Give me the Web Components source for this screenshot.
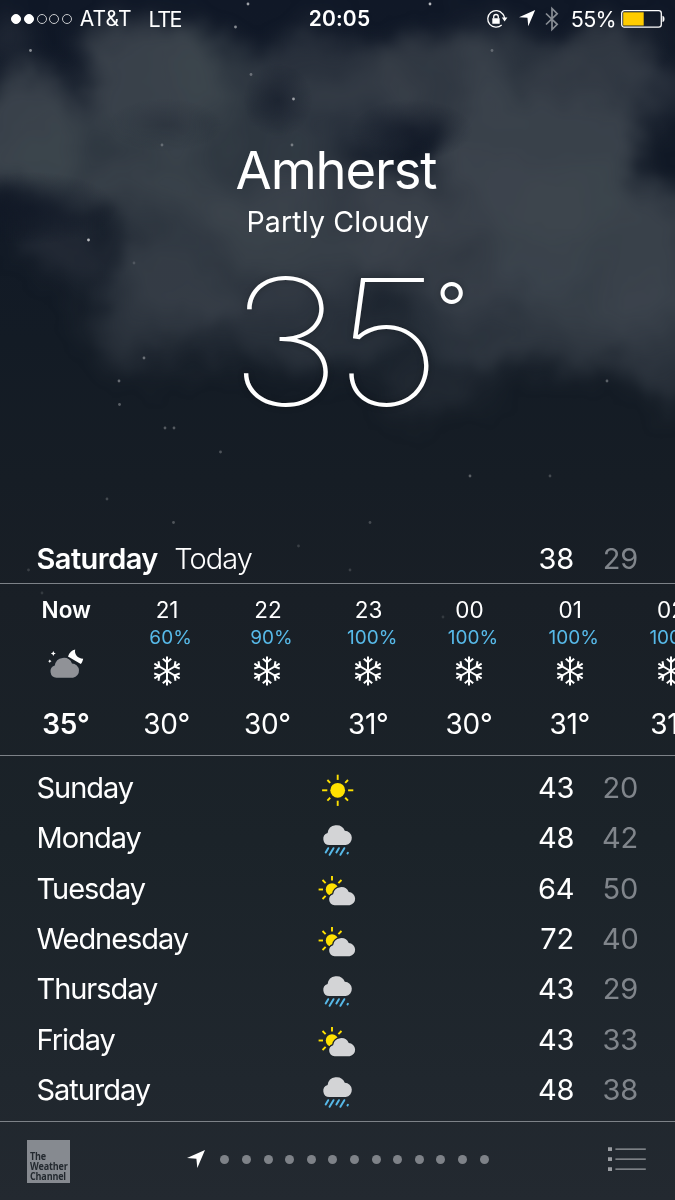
<!DOCTYPE html>
<html lang="en">
<head>
<meta charset="utf-8">
<title>Weather</title>
<style>
  html, body { margin: 0; background: #141b24; }
  body {
    width: 675px; height: 1200px; overflow: hidden;
    font-family: Inter, "Liberation Sans", sans-serif;
    color: #fff;
    --wx-muted: #80858b;
    --wx-rule: #7d8288;
    --wx-precip: #57b9e8;
  }
</style>
</head>
<body>
<wx-app></wx-app>

<script>
/**
 * <wx-icon name="..."> - inline SVG glyphs, sized by their own viewBox.
 */
const cloudPath = 'M6.3 20.7A6.2 6.2 0 0 1 4.6 8.6A9 9 0 0 1 21.8 6.4A7.2 7.2 0 0 1 22.8 20.7z';
const rays = (cx, cy, r1, r2, angles) => angles.map(a => {
  const c = Math.cos(a * Math.PI / 180), s = Math.sin(a * Math.PI / 180);
  return `<path d="M${cx + c * r1} ${cy + s * r1}L${cx + c * r2} ${cy + s * r2}"/>`;
}).join('');

const ICONS = {
  sun: [38, 38, `
    <circle cx="18.7" cy="19.3" r="7.4" fill="#ffe100"/>
    <g stroke="#ffe100" stroke-width="1.9">${rays(18.7, 19.3, 10.4, 15.6, [0, 90, 180, 270])}${rays(18.7, 19.3, 10.6, 14.6, [45, 135, 225, 315])}</g>`],
  rain: [38, 38, `
    <path transform="translate(4 3.4)" fill="#d3d4d6" d="${cloudPath}"/>
    <g stroke="#57b9e8" stroke-width="2" stroke-linecap="round">
      <path d="M9.2 27.2l-2.500 4.200M14.500 27.200l-3.900 6.600M19.900 27.200l-2.500 4.200M25.300 27.200l-3.900 6.600M28.900 31.800l-.4.6"/>
    </g>`],
  partly: [38, 38, `
    <circle cx="13" cy="18.500" r="6.200" fill="#ffe100"/>
    <g stroke="#ffe100" stroke-width="1.900">${rays(13, 18.5, 9, 13.4, [135, 180, 225, 270, 315])}</g>
    <path transform="translate(9.900 15.300) scale(.91)" fill="#d3d4d6" stroke="#1c242a" stroke-width="2.400" paint-order="stroke" d="${cloudPath}"/>`],
  night: [38, 34, `
    <g transform="translate(0 -6.500)">
      <path fill="#fff" d="M28.200 2C27 6.500 30.500 11 36.200 11.300C35.700 13.500 35 15.200 33.800 16.500L21 9C22.300 5 25 2.600 28.200 2z"/>
      <path fill="#fff" d="M6.300 3.500l.8 1.700 1.700.8-1.700.8-.8 1.700-.8-1.700-1.700-.8 1.700-.8zM2.800 12l.6 1.100 1.100.6-1.100.6-.6 1.100-.6-1.100-1.100-.6 1.100-.6z"/>
      <path transform="translate(3.200 9.500)" fill="#909297" stroke="#19212a" stroke-width="2" paint-order="stroke" d="${cloudPath}"/>
    </g>`],
  snow: [30, 30, `
    <g fill="none" stroke="#fff" stroke-width="2">
      ${[0, 60, 120, 180, 240, 300].map(a => `<path transform="rotate(${a} 15 15)" d="M15 15V.4M10.800 2.700L15 6.300l4.200-3.600"/>`).join('')}
    </g>`],
  lock: [22, 20, `
    <path fill="none" stroke="#fff" stroke-width="1.300" d="M16.600 4.800A8.300 8.300 0 1 0 15.700 16M16.600 4.800A8.300 8.300 0 0 1 18.600 9"/>
    <path fill="#fff" d="M15.800 8.600h5.600l-2.800 3.800zM6.300 9.200h7.400v5.500H6.300z"/>
    <path fill="none" stroke="#fff" stroke-width="1.300" d="M7.700 9.500V7.800a2.300 2.300 0 0 1 4.600 0v1.700"/>`],
  arrow: [18, 18, `<path fill="#fff" d="M0 8.100L18 0 10.300 18 9.400 8.700z"/>`],
  bluetooth: [14, 24, `
    <path fill="none" stroke="#888d94" stroke-width="1.700" d="M1 6.500l11.200 10.800L7 22.500V1.500l5.200 5.200L1 17.500"/>`],
  battery: [44, 18, `
    <rect x=".7" y=".7" width="39.600" height="16.400" rx="2.600" fill="none" stroke="#fff" stroke-width="1.300"/>
    <path fill="#fff" d="M41.500 5.700c1.300.3 2 1.500 2 3.200s-.7 2.900-2 3.200z"/>
    <rect x="2.200" y="2.300" width="20.500" height="13.200" fill="#fc0"/>`],
  list: [40, 26, `
    <path fill="#9a9da2" d="M1 1.300h4v3.800H1zM1 11.300h4v3.800H1zM1 21.200h4v3.800H1z"/>
    <path stroke="#9a9da2" stroke-width="1.300" d="M8.400 3.200h30.400M8.400 13.200h30.400M8.400 23.200h30.400"/>`]
};

class WxIcon extends HTMLElement {
  constructor() {
    super();
    this.attachShadow({ mode: 'open' });
  }

  connectedCallback() {
    const [w, h, body] = ICONS[this.getAttribute('name')];
    this.shadowRoot.innerHTML = `
      <style>
        :host { display: block; flex: none; }
        svg { display: block; overflow: visible; }
      </style>
      <svg width="${w}" height="${h}" viewBox="0 0 ${w} ${h}">${body}</svg>
    `;
  }
}

/**
 * <wx-sky> - night sky with clouds and stars; the slot sits on top.
 */
const STARS = [
  [248, 4, .6], [430, 4, .7], [235.5, 27, .5], [30.5, 50.5, .5], [492, 50.5, .25], [251, 74.5, .3],
  [293.5, 99, .55], [162, 145, .25], [292, 145, .35], [88.5, 240, .7], [134, 263, .15], [144, 358, .35],
  [119, 381, .35], [119.5, 404.5, .3], [165, 428, .28], [174, 428, .28], [220.5, 452, .25], [607, 381, .3],
  [470, 476, .3], [550, 476, .2], [107, 499, .2], [173.5, 522.5, .25], [370, 522.5, .2], [298.5, 546, .15],
  [28.5, 570, .15], [350, 570, .15], [42, 593, .12], [443, 617, .12]
];
// cx, cy, rx, ry, opacity
const CLOUDS = [
  [155, 85, 72, 62, .9], [215, 85, 54, 52, .65], [28, 135, 58, 60, .9], [100, 165, 90, 50, .65],
  [10, 40, 30, 26, .3], [160, 195, 90, 36, .6], [330, 70, 76, 44, .55], [250, 175, 90, 60, .65],
  [440, 80, 70, 50, .7], [505, 65, 54, 44, .6], [600, 65, 60, 40, .7], [655, 90, 35, 30, .4],
  [340, 115, 70, 40, .5], [545, 165, 100, 80, .9], [480, 235, 130, 70, .7], [330, 225, 130, 55, .7],
  [590, 250, 90, 80, .65], [660, 260, 52, 74, .75], [530, 315, 130, 54, .5], [240, 265, 130, 60, .55],
  [155, 290, 72, 54, .5], [160, 335, 70, 34, .3], [300, 325, 100, 44, .4], [665, 345, 46, 58, .5],
  [55, 250, 34, 28, .35], [435, 390, 48, 24, .3], [340, 350, 120, 26, .2], [560, 345, 120, 26, .3]
];

class WxSky extends HTMLElement {
  constructor() {
    super();
    this.attachShadow({ mode: 'open' });
    this.shadowRoot.innerHTML = `
      <style>
        :host {
          display: block; position: relative; height: 1200px; overflow: hidden;
          background: linear-gradient(#101827 0, #111926 160px, #131b25 340px, #161d25 480px, #191f26 600px, #1b2329 840px, #20272e 1080px, #232930 1200px);
        }
        svg { position: absolute; inset: 0; }
        .content { position: relative; height: 100%; }
      </style>
      <svg width="675" height="1200">
        <defs>
          <filter id="puff" filterUnits="userSpaceOnUse" x="-80" y="-80" width="835" height="620" color-interpolation-filters="sRGB">
            <feGaussianBlur stdDeviation="13" result="soft"/>
            <feTurbulence type="fractalNoise" baseFrequency=".014" numOctaves="4" seed="8"/>
            <feDisplacementMap in="soft" scale="64" xChannelSelector="R" yChannelSelector="G"/>
            <feGaussianBlur stdDeviation="3"/>
          </filter>
          <radialGradient id="shade"><stop offset="0" stop-color="#121927"/><stop offset="1" stop-color="#121927" stop-opacity="0"/></radialGradient>
        </defs>
        <g filter="url(#puff)" fill="#3e464f">
          ${CLOUDS.map(([x, y, rx, ry, o]) => `<ellipse cx="${x}" cy="${y}" rx="${rx}" ry="${ry}" opacity="${o}"/>`).join('')}
        </g>
        <g fill="url(#shade)">
          <ellipse cx="278" cy="100" rx="34" ry="36" opacity=".55"/>
          <ellipse cx="412" cy="130" rx="60" ry="30" opacity=".7"/>
          <ellipse cx="165" cy="125" rx="56" ry="26" opacity=".3"/>
          <ellipse cx="30" cy="208" rx="85" ry="36" opacity=".85"/>
        </g>
        <g fill="#fff">${STARS.map(([x, y, o]) => `<circle cx="${x}" cy="${y}" r="1.4" opacity="${o}"/>`).join('')}</g>
      </svg>
      <div class="content"><slot></slot></div>
    `;
  }
}

/** <wx-status-bar> - signal, carrier, clock and battery. */
class WxStatusBar extends HTMLElement {
  constructor() {
    super();
    this.attachShadow({ mode: 'open' });
    this.shadowRoot.innerHTML = `
      <style>
        :host {
          display: grid; grid-template-columns: 1fr auto 1fr; align-items: center;
          height: 37px; padding: 0 10px 0 11px; font-size: 21px;
        }
        .side { display: flex; align-items: center; }
        .right { justify-content: flex-end; }
        .dots { display: flex; gap: 2.8px; margin-right: 7.5px; }
        .dots i { box-sizing: border-box; width: 10px; height: 10px; border: 1px solid #c8cacd; border-radius: 50%; }
        .dots .on { background: #fff; border-color: #fff; }
        .net { margin-left: 17px; letter-spacing: -1.5px; font-size: 21.5px; }
        .carrier { letter-spacing: .1px; }
        .time { font-weight: 600; letter-spacing: .2px; padding-left: 3px; }
        .pct { margin: 0 5px 0 12px; letter-spacing: -.7px; font-size: 21.5px; }
        .loc { margin-right: 10.5px; zoom: .9; }
        .lock { margin-right: 11.5px; }
      </style>
      <div class="side">
        <span class="dots"><i class="on"></i><i class="on"></i><i></i><i></i><i></i></span>
        <span class="carrier">AT&amp;T</span><span class="net">LTE</span>
      </div>
      <span class="time">20:05</span>
      <div class="side right">
        <wx-icon class="lock" name="lock"></wx-icon>
        <wx-icon class="loc" name="arrow"></wx-icon>
        <wx-icon name="bluetooth"></wx-icon>
        <span class="pct">55%</span>
        <wx-icon name="battery"></wx-icon>
      </div>
    `;
  }
}

/**
 * <wx-current> - city, condition and the large temperature.
 * Attributes: city, condition, temp
 */
class WxCurrent extends HTMLElement {
  constructor() {
    super();
    this.attachShadow({ mode: 'open' });
  }

  connectedCallback() {
    this.shadowRoot.innerHTML = `
      <style>
        :host { display: flex; flex-direction: column; align-items: center; height: 497px; box-sizing: border-box; padding-top: 101px; }
        .city { font-size: 52.5px; line-height: 64px; letter-spacing: -1.1px; padding-right: 3px; }
        .condition { font-size: 28.5px; line-height: 39px; letter-spacing: .15px; padding-left: 1px; }
        .temp {
          display: flex; align-items: flex-start; margin-left: 32px;
          font-size: 175px; line-height: 200px; font-weight: 100; text-shadow: 0 0 6px rgba(0,0,0,.25);
        }
        .num { transform: scaleX(1.11); letter-spacing: -8px; }
        .deg { font-size: 70px; line-height: 134px; font-weight: 300; margin-left: 12px; }
      </style>
      <div class="city">${this.getAttribute('city')}</div>
      <div class="condition">${this.getAttribute('condition')}</div>
      <div class="temp"><span class="num">${this.getAttribute('temp')}</span><span class="deg">°</span></div>
    `;
  }
}

/**
 * <wx-day> - one row of the daily forecast, name in the slot.
 * Attributes: high, low, icon (optional)
 */
class WxDay extends HTMLElement {
  constructor() {
    super();
    this.attachShadow({ mode: 'open' });
  }

  connectedCallback() {
    const icon = this.getAttribute('icon');
    this.shadowRoot.innerHTML = `
      <style>
        :host {
          display: grid; grid-template-columns: 1fr 38px 1fr; align-items: center;
          height: 50.33px; padding: 0 37px 0 36.5px; font-size: 29px; line-height: 36px;
        }
        .name { letter-spacing: -1.05px; }
        .temps { display: flex; justify-content: flex-end; gap: 28px; }
        .temps span { width: 36px; text-align: right; letter-spacing: -.2px; }
        .low { color: var(--wx-muted); }
        wx-icon { margin: 3px 0 0 1px; }
      </style>
      <div class="name"><slot></slot></div>
      <div>${icon ? `<wx-icon name="${icon}"></wx-icon>` : ''}</div>
      <div class="temps">
        <span>${this.getAttribute('high')}</span>
        <span class="low">${this.getAttribute('low')}</span>
      </div>
    `;
  }
}

/**
 * <wx-hour> - one column of the hourly strip.
 * Attributes: time, icon, temp, precip (optional), now (flag)
 */
class WxHour extends HTMLElement {
  constructor() {
    super();
    this.attachShadow({ mode: 'open' });
  }

  connectedCallback() {
    this.shadowRoot.innerHTML = `
      <style>
        :host { display: flex; flex-direction: column; align-items: center; flex: 0 0 100.8px; }
        :host([now]) { font-weight: 600; }
        .time { font-size: 22.5px; line-height: 28px; margin-top: 12px; padding-left: 1px; }
        .precip { height: 26px; line-height: 27px; font-size: 19px; color: var(--wx-precip); padding-left: 8px; }
        .icon { height: 42px; display: flex; align-items: center; }
        .temp { font-size: 28px; line-height: 34px; margin-top: 15px; letter-spacing: -.3px; }
      </style>
      <div class="time">${this.getAttribute('time')}</div>
      <div class="precip">${this.getAttribute('precip') || ''}</div>
      <div class="icon"><wx-icon name="${this.getAttribute('icon')}"></wx-icon></div>
      <div class="temp">${this.getAttribute('temp')}°</div>
    `;
  }
}

/** <wx-hourly> - strip of wx-hour columns, clipped at the right edge. */
class WxHourly extends HTMLElement {
  constructor() {
    super();
    this.attachShadow({ mode: 'open' });
    this.shadowRoot.innerHTML = `
      <style>
        :host {
          display: flex; overflow: hidden; box-sizing: border-box; height: 173px; padding-left: 15.4px;
          border-top: 1px solid var(--wx-rule); border-bottom: 1px solid var(--wx-rule);
        }
      </style>
      <slot></slot>
    `;
  }
}

/**
 * <wx-footer> - provider logo, page dots and list button.
 * Attributes: pages
 */
class WxFooter extends HTMLElement {
  constructor() {
    super();
    this.attachShadow({ mode: 'open' });
  }

  connectedCallback() {
    const pages = Number(this.getAttribute('pages'));
    this.shadowRoot.innerHTML = `
      <style>
        :host {
          display: flex; align-items: center; justify-content: space-between; box-sizing: border-box;
          height: 79px; padding: 0 28px 4px 27px; border-top: 1px solid var(--wx-rule);
        }
        .logo {
          box-sizing: border-box; width: 43px; height: 43px; padding: 10.5px 0 0 3px; margin-top: 5px;
          background: #868a90; color: #23292f;
          font: 700 10.5px/10px "Open Sans", sans-serif; letter-spacing: -.2px;
        }
        .logo span { display: block; transform: scaleX(.86); transform-origin: 0 50%; }
        .pages { display: flex; align-items: center; gap: 12.6px; margin-right: 1px; }
        .pages i { width: 9px; height: 9px; border-radius: 50%; background: #7e8288; }
        .pages wx-icon { margin-right: 2.5px; }
      </style>
      <div class="logo"><span>The</span><span>Weather</span><span>Channel</span></div>
      <div class="pages"><wx-icon name="arrow"></wx-icon>${'<i></i>'.repeat(pages)}</div>
      <wx-icon name="list"></wx-icon>
    `;
  }
}

/** <wx-app> - the whole screen, built from the forecast data below. */
const HOURS = [
  ['Now', '', 'night', 35], ['21', '60%', 'snow', 30], ['22', '90%', 'snow', 30], ['23', '100%', 'snow', 31],
  ['00', '100%', 'snow', 30], ['01', '100%', 'snow', 31], ['02', '100%', 'snow', 31]
];
const DAYS = [
  ['Sunday', 'sun', 43, 20], ['Monday', 'rain', 48, 42], ['Tuesday', 'partly', 64, 50], ['Wednesday', 'partly', 72, 40],
  ['Thursday', 'rain', 43, 29], ['Friday', 'partly', 43, 33], ['Saturday', 'rain', 48, 38]
];

class WxApp extends HTMLElement {
  constructor() {
    super();
    this.attachShadow({ mode: 'open' });
    this.shadowRoot.innerHTML = `
      <style>
        :host { display: block; width: 675px; height: 1200px; }
        .today { height: 49px; }
        .today b { font-weight: 600; margin-right: 16.5px; letter-spacing: -.55px; }
        .today .label { font-weight: 350; letter-spacing: -.95px; }
        .days { box-sizing: border-box; height: 365px; padding-top: 7px; }
      </style>
      <wx-sky>
        <wx-status-bar></wx-status-bar>
        <wx-current city="Amherst" condition="Partly Cloudy" temp="35"></wx-current>
        <wx-day class="today" high="38" low="29"><b>Saturday</b><span class="label">Today</span></wx-day>
        <wx-hourly>
          ${HOURS.map(([time, precip, icon, temp], i) => `<wx-hour time="${time}" precip="${precip}" icon="${icon}" temp="${temp}" ${i === 0 ? 'now' : ''}></wx-hour>`).join('')}
        </wx-hourly>
        <div class="days">
          ${DAYS.map(([name, icon, high, low]) => `<wx-day icon="${icon}" high="${high}" low="${low}">${name}</wx-day>`).join('')}
        </div>
        <wx-footer pages="13"></wx-footer>
      </wx-sky>
    `;
  }
}

customElements.define('wx-icon', WxIcon);
customElements.define('wx-sky', WxSky);
customElements.define('wx-status-bar', WxStatusBar);
customElements.define('wx-current', WxCurrent);
customElements.define('wx-day', WxDay);
customElements.define('wx-hour', WxHour);
customElements.define('wx-hourly', WxHourly);
customElements.define('wx-footer', WxFooter);
customElements.define('wx-app', WxApp);
</script>
</body>
</html>
